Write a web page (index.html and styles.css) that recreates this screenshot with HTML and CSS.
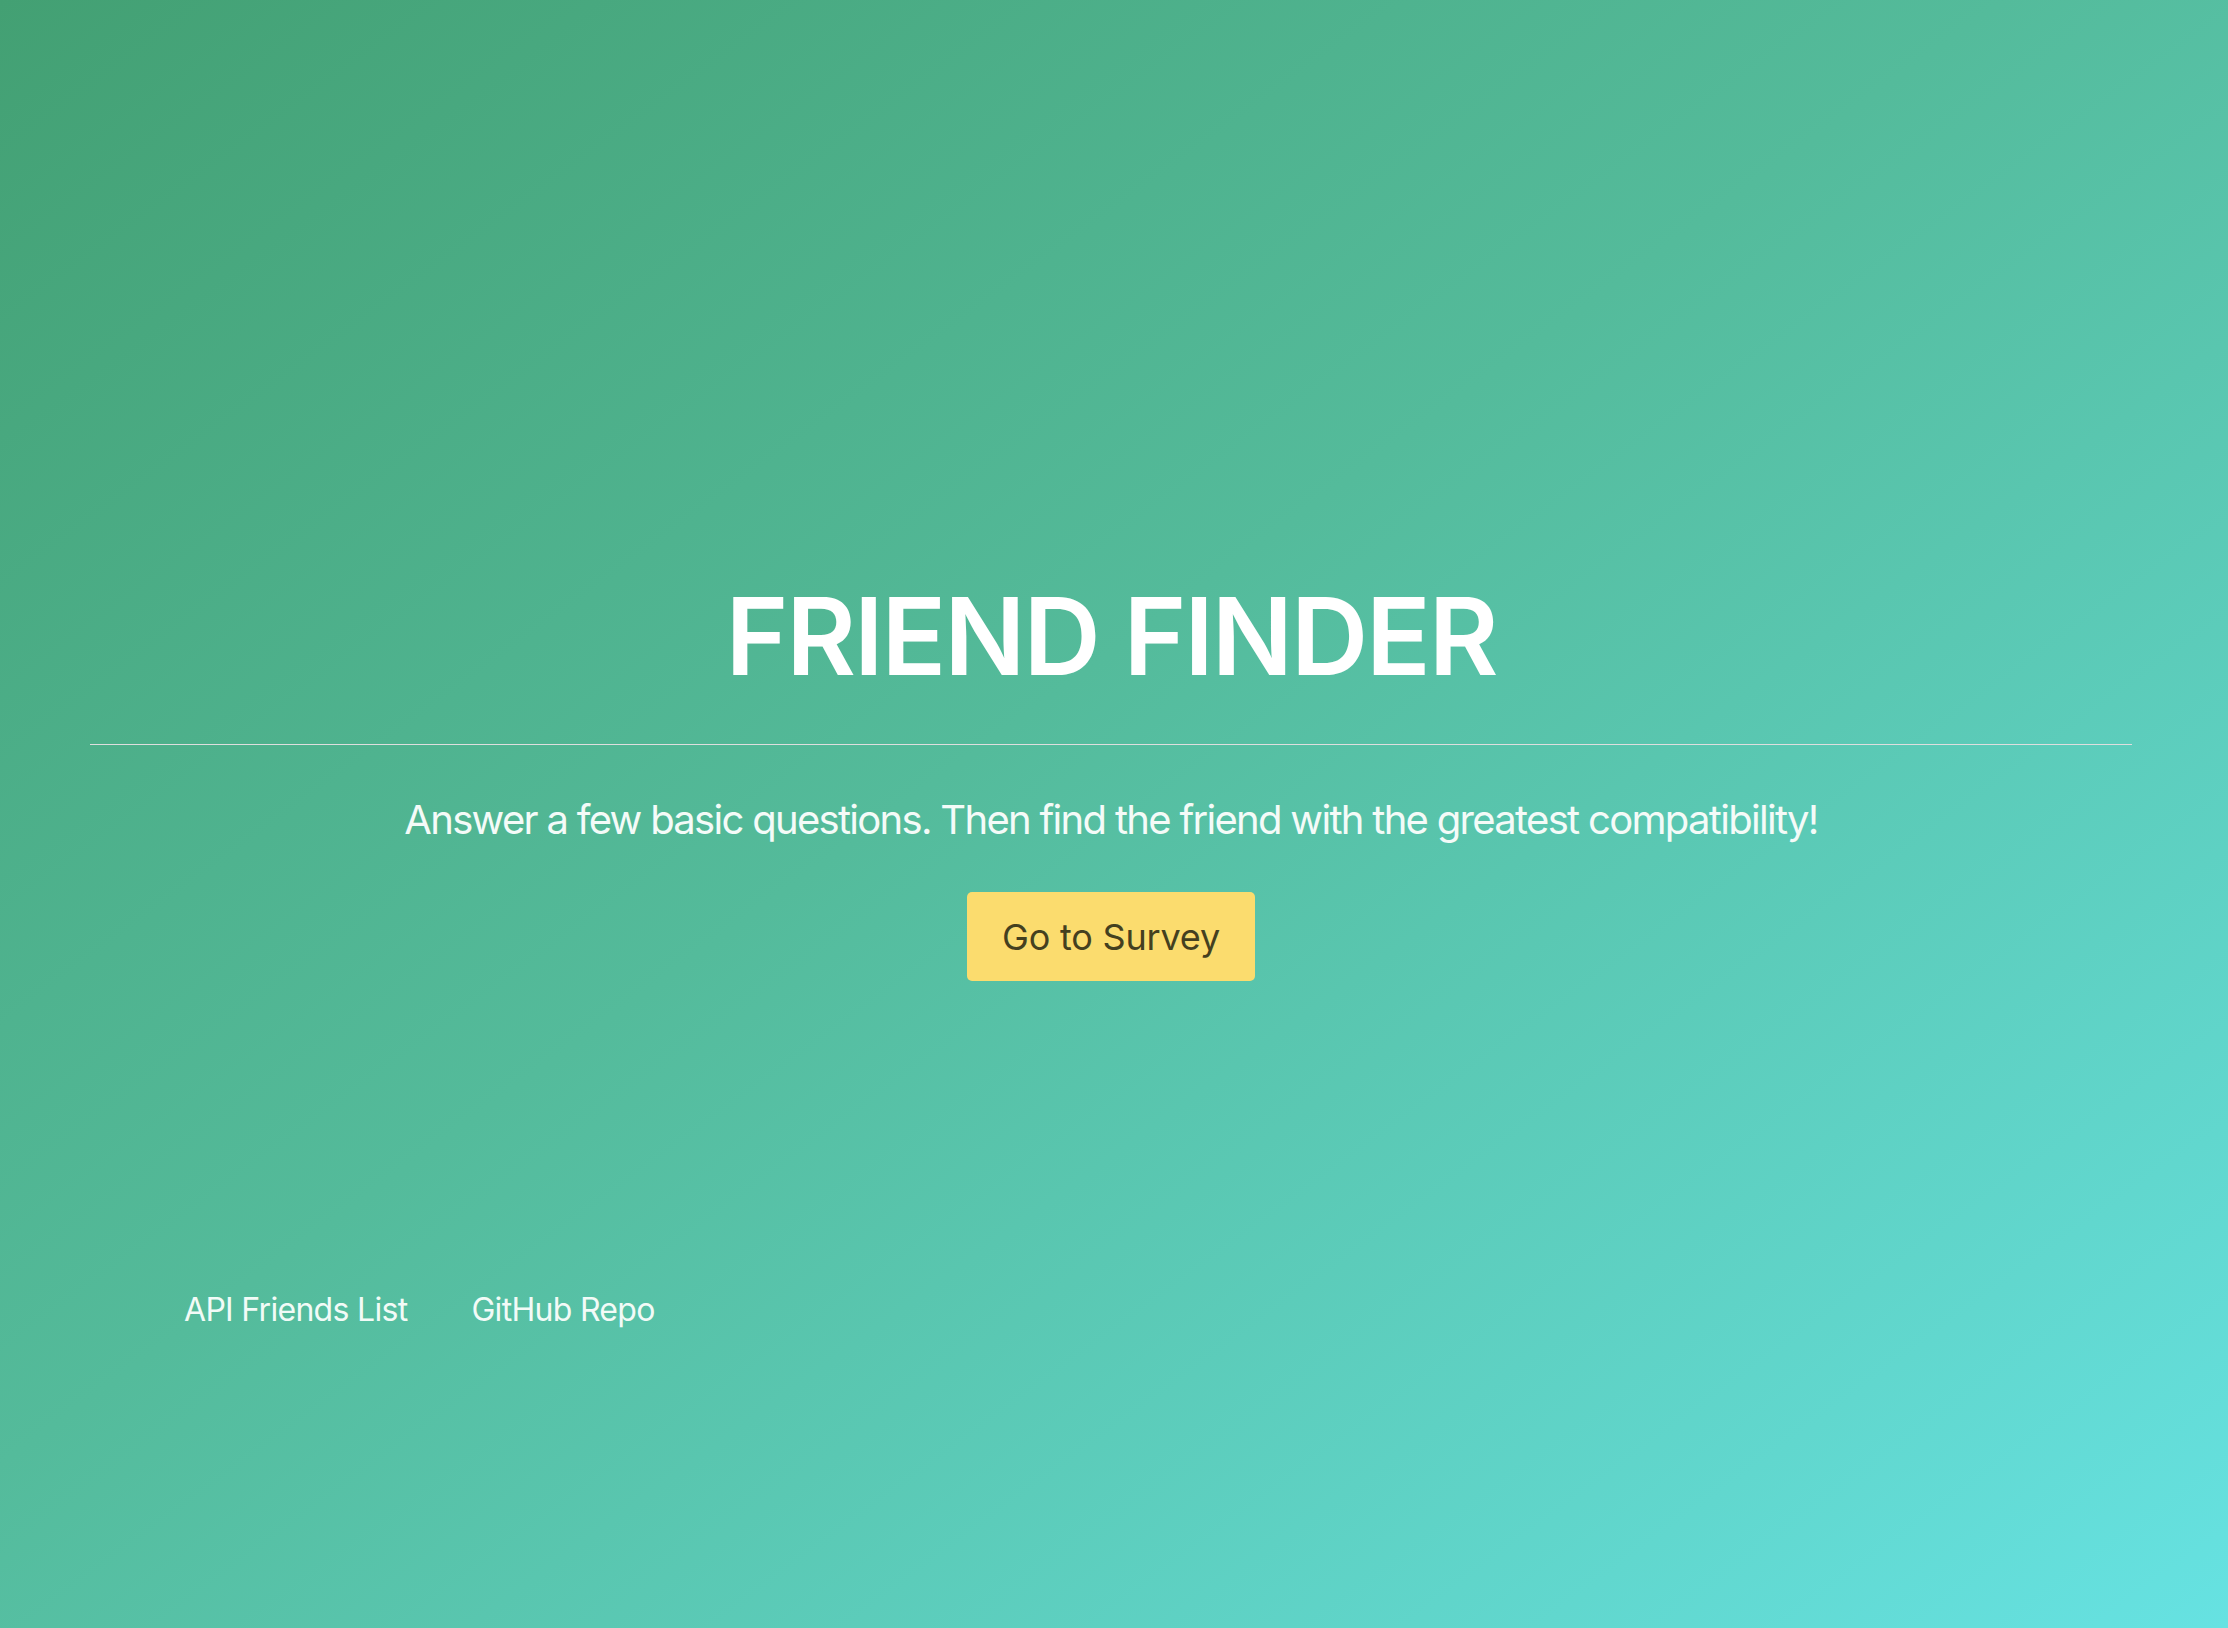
FILE: index.html
```html
<!DOCTYPE html>
<html lang="en">
<head>
<meta charset="utf-8">
<title>Friend Finder</title>
<link rel="stylesheet" href="styles.css">
</head>
<body>
  <main class="page">
    <section class="hero">
      <h1 class="title">FRIEND FINDER</h1>
      <hr class="rule">
      <p class="lead">Answer a few basic questions. Then find the friend with the greatest compatibility!</p>
      <a class="btn" href="#">Go to Survey</a>
    </section>
    <footer class="links">
      <a class="link" href="#">API Friends List</a>
      <a class="link" href="#">GitHub Repo</a>
    </footer>
  </main>
</body>
</html>
```
FILE: styles.css
```css
html, body {
  margin: 0;
  padding: 0;
}
body {
  width: 2228px;
  height: 1628px;
  background: linear-gradient(to bottom right, #43a073, #54bb9b 45%, #66e2e2);
  font-family: Inter, "Noto Sans", sans-serif;
  color: #ffffff;
  overflow: hidden;
}
.page {
  display: flex;
  flex-direction: column;
  padding-top: 572px;
}
.hero {
  display: flex;
  flex-direction: column;
  align-items: center;
  margin-left: 90px;
  width: 2042px;
}
.title {
  margin: 0;
  font-size: 107px;
  line-height: 128px;
  font-weight: 600;
  letter-spacing: -2.1px;
  color: #fff;
}
.rule {
  align-self: stretch;
  margin: 44px 0 0 0;
  border: 0;
  border-top: 1px solid #dedede;
  height: 0;
}
.lead {
  margin: 51px 0 0 0;
  font-size: 40px;
  line-height: 48px;
  font-weight: 400;
  letter-spacing: -1.7px;
  color: #f4fbf8;
}
.btn {
  margin-top: 48px;
  width: 288px;
  height: 89px;
  box-sizing: border-box;
  display: flex;
  align-items: center;
  justify-content: center;
  background: #fbdc6e;
  border-radius: 5px;
  color: #44401f;
  font-size: 36px;
  letter-spacing: -0.2px;
  text-decoration: none;
}
.links {
  display: flex;
  gap: 64px;
  margin-top: 310px;
  padding-left: 184px;
}
.link {
  font-size: 32px;
  line-height: 38px;
  letter-spacing: -0.7px;
  color: #f2fbf7;
  text-decoration: none;
}
```
